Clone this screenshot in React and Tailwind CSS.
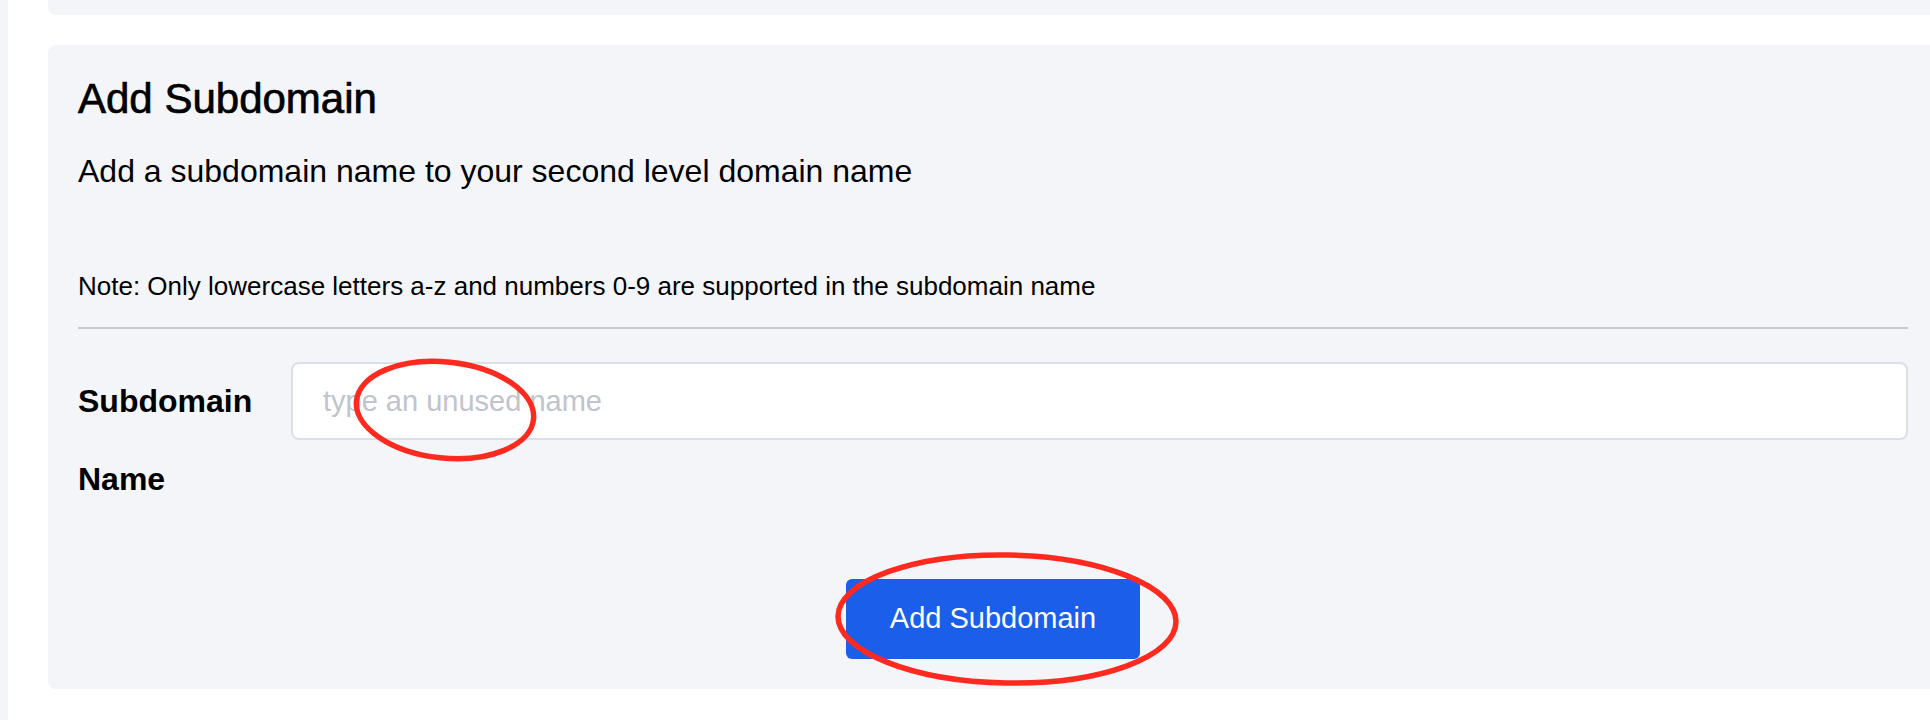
export default function App() {
  return (
    <div className="relative flex h-[720px] overflow-hidden bg-white font-['Liberation_Sans',Arial,sans-serif] text-black">
      {/* sidebar edge */}
      <div className="w-2 shrink-0 bg-[#f4f5f9]" />

      <div className="flex-1 mr-[-8px] pl-10">
        {/* previous card (cut off) */}
        <div className="h-[15px] rounded-b-lg bg-[#f4f5f9]" />

        {/* Add subdomain card */}
        <div className="mt-[30px] rounded-lg bg-[#f4f5f9] px-[30px] pt-[29px] pb-[30px]">
          <h2 className="text-[42px] leading-[50px] font-normal [-webkit-text-stroke:0.7px_black]">Add Subdomain</h2>
          <p className="mt-[27px] text-[32px] leading-[40px]">
            Add a subdomain name to your second level domain name
          </p>
          <p className="mt-[79px] text-[26px] leading-[32px]">
            Note: Only lowercase letters a-z and numbers 0-9 are supported in the subdomain name
          </p>
          <div className="mt-[25px] h-[2px] bg-[#c9c9c9]" />

          <div className="mt-[33px] flex items-start">
            <label className="w-[213px] shrink-0 text-[32px] font-bold leading-[78px]">
              Subdomain Name
            </label>
            <input
              type="text"
              placeholder="type an unused name"
              className="h-[78px] flex-1 rounded-lg border-2 border-[#dcdfe6] bg-white pl-[30px] text-[29px] outline-none placeholder:text-[#c0c4cc]"
            />
          </div>

          <div className="mt-[61px] flex justify-center">
            <button className="h-[80px] w-[294px] rounded-md bg-[#1a5eea] text-[29px] text-white">
              Add Subdomain
            </button>
          </div>
        </div>
      </div>

      {/* red annotation marks */}
      <svg className="pointer-events-none absolute inset-0" width="1930" height="720">
        <ellipse cx="445" cy="410" rx="89" ry="48" transform="rotate(6 445 410)" fill="none" stroke="#ff2a1f" strokeWidth="5.5" />
        <ellipse cx="1007" cy="619" rx="169" ry="64" transform="rotate(1 1007 619)" fill="none" stroke="#ff2a1f" strokeWidth="5.5" />
      </svg>
    </div>
  );
}
